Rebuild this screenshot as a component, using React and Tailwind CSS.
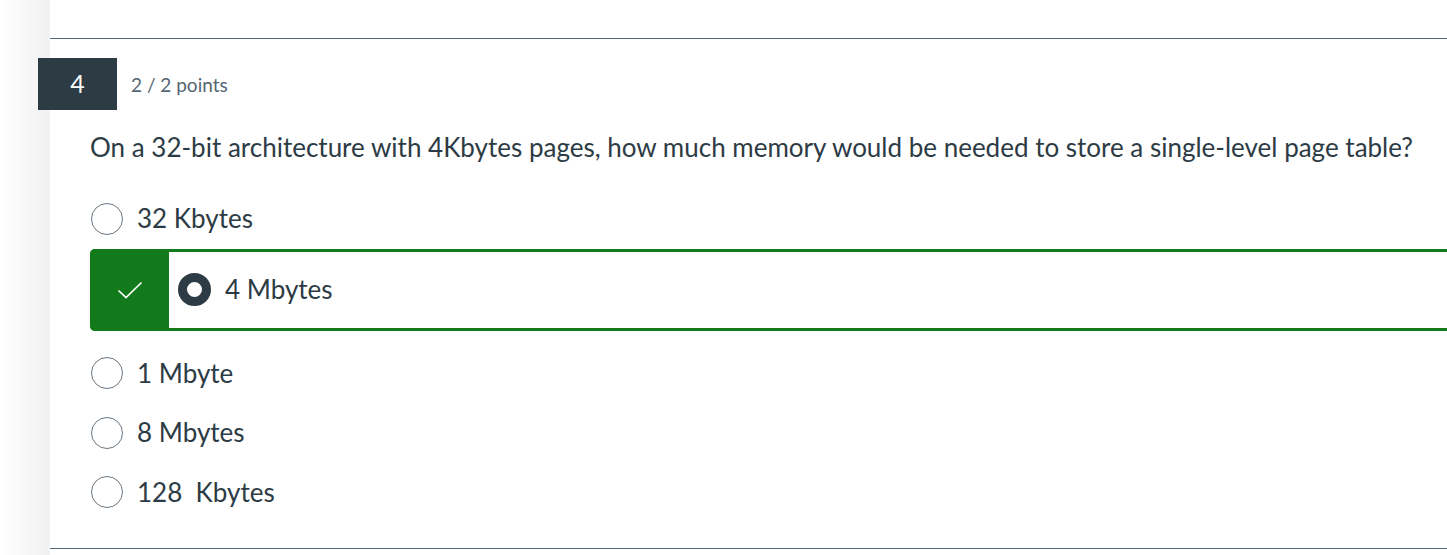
import React from 'react';

const options = [
  { label: '32 Kbytes' },
  { label: '4 Mbytes', correct: true },
  { label: '1 Mbyte' },
  { label: '8 Mbytes' },
  { label: '128\u00a0 Kbytes' },
];

function Radio({ checked }) {
  return checked ? (
    <span className="block w-[33px] h-[33px] rounded-full border-[9px] border-[#2d3b45] bg-white shrink-0" />
  ) : (
    <span className="block w-[32px] h-[32px] rounded-full border border-[#6b7780] bg-white shrink-0" />
  );
}

function Option({ label, correct }) {
  if (correct) {
    return (
      <div className="flex h-[82px] mb-[13px] -mr-6 border-[3px] border-l-0 border-[#127a1b] rounded-l-[5px]">
        <div className="w-[79px] -my-[3px] bg-[#127a1b] rounded-l-[5px] flex items-center justify-center">
          <svg width="26" height="18" viewBox="0 0 26 18" fill="none">
            <path d="M1.5 9.5 L9 16.5 L24.5 1.5" stroke="white" strokeWidth="1.7" />
          </svg>
        </div>
        <div className="flex items-center pl-[9px] gap-[14px]">
          <Radio checked />
          <span className="text-[26px] text-[#2d3b45]">{label}</span>
        </div>
      </div>
    );
  }
  return (
    <div className="flex items-center h-[59.5px] gap-[14px] pl-px">
      <Radio />
      <span className="text-[26px] text-[#2d3b45] whitespace-pre">{label}</span>
    </div>
  );
}

export default function App() {
  return (
    <div className="flex w-[1447px] h-[555px] bg-white overflow-hidden" style={{ fontFamily: 'Lato, "Open Sans", sans-serif' }}>
      <div className="w-[50px] shrink-0 bg-gradient-to-r from-white to-[#f1f1f1]" />
      <div className="flex-1 flex flex-col min-w-0">
        <div className="h-[38px]" />
        <div className="border-t border-[#556572]" />
        <div className="flex items-center mt-[19px] -ml-3">
          <div className="w-[79px] h-[52px] bg-[#2d3b45] text-white text-[25px] flex items-center justify-center">4</div>
          <div className="ml-[14px] mt-[3px] text-[19px] text-[#556572]">2 / 2 points</div>
        </div>
        <div className="pl-10 flex-1 flex flex-col">
          <p className="mt-[22px] text-[26px] text-[#2d3b45] leading-[30px] whitespace-nowrap">
            On a 32-bit architecture with 4Kbytes pages, how much memory would be needed to store a single-level page table?
          </p>
          <div className="mt-[27px] flex flex-col">
            {options.map((o) => (
              <Option key={o.label} {...o} />
            ))}
          </div>
          <div className="flex-1" />
        </div>
        <div className="border-t border-[#556572] mb-[6px]" />
      </div>
    </div>
  );
}
